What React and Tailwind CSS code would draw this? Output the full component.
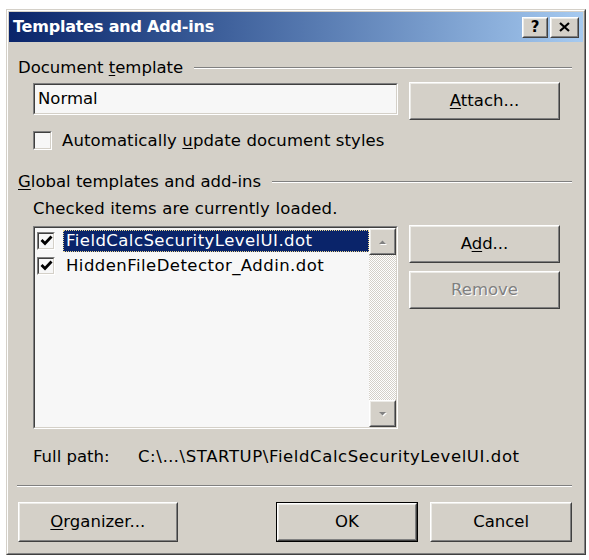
import React from 'react';

// Classic 3D bevels used throughout the dialog
const Raised = ({ className = '', inner = '', children }) => (
  <div className={`border border-white border-r-[#404040] border-b-[#404040] ${className}`}>
    <div className={`w-full h-full border border-[#ecebe7] border-r-[#808080] border-b-[#808080] bg-[#d4d0c8] flex items-center justify-center ${inner}`}>
      {children}
    </div>
  </div>
);

const Sunken = ({ className = '', children }) => (
  <div className={`border border-[#808080] border-r-white border-b-white ${className}`}>
    <div className="w-full h-full border border-[#404040] border-r-[#d4d0c8] border-b-[#d4d0c8] bg-[#f7f7f7]">
      {children}
    </div>
  </div>
);

const Check = () => (
  <svg width="13" height="11" viewBox="0 0 13 11">
    <path d="M1.5 5 L5 8.5 L11.5 1.5" fill="none" stroke="#000" strokeWidth="2.8" />
  </svg>
);

const CheckBox = ({ checked, size = 'w-[19px] h-[19px]' }) => (
  <Sunken className={`${size} shrink-0`}>
    <div className="w-full h-full flex items-center justify-center">{checked && <Check />}</div>
  </Sunken>
);

const GroupHeader = ({ children, className = '' }) => (
  <div className={`flex items-center h-[20px] ${className}`}>
    <span className="leading-[20px] whitespace-nowrap">{children}</span>
    <div className="flex-1 ml-[11px] h-[2px] border-t border-t-[#808080] border-b border-b-white" />
  </div>
);

const Arrow = ({ up }) => (
  <svg width="11" height="7" viewBox="0 0 11 7">
    <path d={up ? 'M2 6 L9 6 L5.5 2.5 Z' : 'M2 2 L9 2 L5.5 5.5 Z'} fill="#ffffff" transform="translate(1 1)" />
    <path d={up ? 'M2 6 L9 6 L5.5 2.5 Z' : 'M2 2 L9 2 L5.5 5.5 Z'} fill="#808080" />
  </svg>
);

const items = [
  { name: 'FieldCalcSecurityLevelUI.dot', selected: true },
  { name: 'HiddenFileDetector_Addin.dot', selected: false },
];

export default function App() {
  return (
    <div className="w-[589px] h-[560px] bg-white pl-[6px] pt-[9px] text-black text-[16.5px] font-['DejaVu_Sans',sans-serif]">
      <div className="w-[580px] h-[546px] border border-[#d4d0c8] border-r-[#404040] border-b-[#404040]">
        <div className="w-full h-full border border-white border-r-[#808080] border-b-[#808080] bg-[#d4d0c8] p-[1px] flex flex-col">
          {/* caption */}
          <div className="h-[30px] shrink-0 flex items-center bg-linear-to-r from-[#0a246a] to-[#a6caf0] pl-[4px] pr-[4px]">
            <span className="flex-1 text-white font-bold text-[16px] tracking-[-0.2px] leading-[20px]">Templates and Add-ins</span>
            <Raised className="w-[26px] h-[21px]">
              <span className="font-bold text-[15px] leading-none">?</span>
            </Raised>
            <Raised className="w-[29px] h-[21px] ml-[2px]">
              <svg width="11" height="10" viewBox="0 0 11 10">
                <path d="M1 1 L10 9 M10 1 L1 9" stroke="#000" strokeWidth="2.2" />
              </svg>
            </Raised>
          </div>

          <div className="pl-[9px] pr-[11px] flex flex-col">
            <GroupHeader className="mt-[16px]">
              Document <u className="underline-offset-[2px]">t</u>emplate
            </GroupHeader>

            <div className="flex mt-[4px] h-[38px]">
              <Sunken className="ml-[15px] mt-[1px] w-[365px] h-[32px]">
                <div className="pl-[3px] leading-[28px]">Normal</div>
              </Sunken>
              <Raised className="ml-[11px] w-[151px] h-[38px]">
                <span><u className="underline-offset-[2px]">A</u>ttach...</span>
              </Raised>
            </div>

            <div className="flex items-center mt-[10px] h-[21px] pl-[15px]">
              <CheckBox />
              <span className="ml-[10px] leading-[20px] tracking-[0.1px]">
                Automatically <u className="underline-offset-[2px]">u</u>pdate document styles
              </span>
            </div>

            <GroupHeader className="mt-[21px]">
              <u className="underline-offset-[2px]">G</u>lobal templates and add-ins
            </GroupHeader>

            <div className="mt-[7px] pl-[15px] leading-[20px] h-[20px] tracking-[0.15px]">Checked items are currently loaded.</div>

            <div className="flex mt-[6px]">
              <Sunken className="ml-[15px] mt-[1px] w-[365px] h-[203px] shrink-0">
                <div className="flex h-full">
                  <div className="flex-1 flex flex-col">
                    {items.map((it) => (
                      <div key={it.name} className="h-[25px] flex items-center pl-[2px]">
                        <CheckBox checked size="w-[18px] h-[18px]" />
                        <div
                          className={`ml-[8px] flex-1 h-[22px] flex items-center pl-[2px] leading-[20px] tracking-[0.45px] border border-dotted ${
                            it.selected ? 'bg-[#0a246a] text-white border-[#e8d590]' : 'border-transparent'
                          }`}
                        >
                          {it.name}
                        </div>
                      </div>
                    ))}
                  </div>
                  <div className="w-[27px] flex flex-col shrink-0">
                    <Raised className="h-[27px]">
                      <Arrow up />
                    </Raised>
                    <div className="flex-1 bg-[repeating-conic-gradient(#ffffff_0%_25%,#d4d0c8_0%_50%)] bg-[length:2px_2px]" />
                    <Raised className="h-[27px]">
                      <Arrow />
                    </Raised>
                  </div>
                </div>
              </Sunken>
              <div className="ml-[11px] flex flex-col">
                <Raised className="w-[151px] h-[38px]">
                  <span>A<u className="underline-offset-[2px]">d</u>d...</span>
                </Raised>
                <Raised className="w-[151px] h-[38px] mt-[8px]">
                  <span className="text-[#808080] [text-shadow:1px_1px_0_#ffffff]">Remove</span>
                </Raised>
              </div>
            </div>

            <div className="flex mt-[18px] h-[20px] leading-[20px] pl-[15px]">
              <span className="w-[105px]">Full path:</span>
              <span className="tracking-[0.6px]">C:\…\STARTUP\FieldCalcSecurityLevelUI.dot</span>
            </div>

            <div className="mt-[18px] -ml-[1px] h-[2px] border-t border-t-[#808080] border-b border-b-white" />

            <div className="flex mt-[15px]">
              <Raised className="w-[160px] h-[40px]">
                <span><u className="underline-offset-[2px]">O</u>rganizer...</span>
              </Raised>
              <div className="ml-[98px] w-[143px] h-[40px] border border-black">
                <Raised className="w-full h-full">
                  <span>OK</span>
                </Raised>
              </div>
              <Raised className="ml-[12px] w-[142px] h-[40px]">
                <span>Cancel</span>
              </Raised>
            </div>
          </div>
        </div>
      </div>
    </div>
  );
}
